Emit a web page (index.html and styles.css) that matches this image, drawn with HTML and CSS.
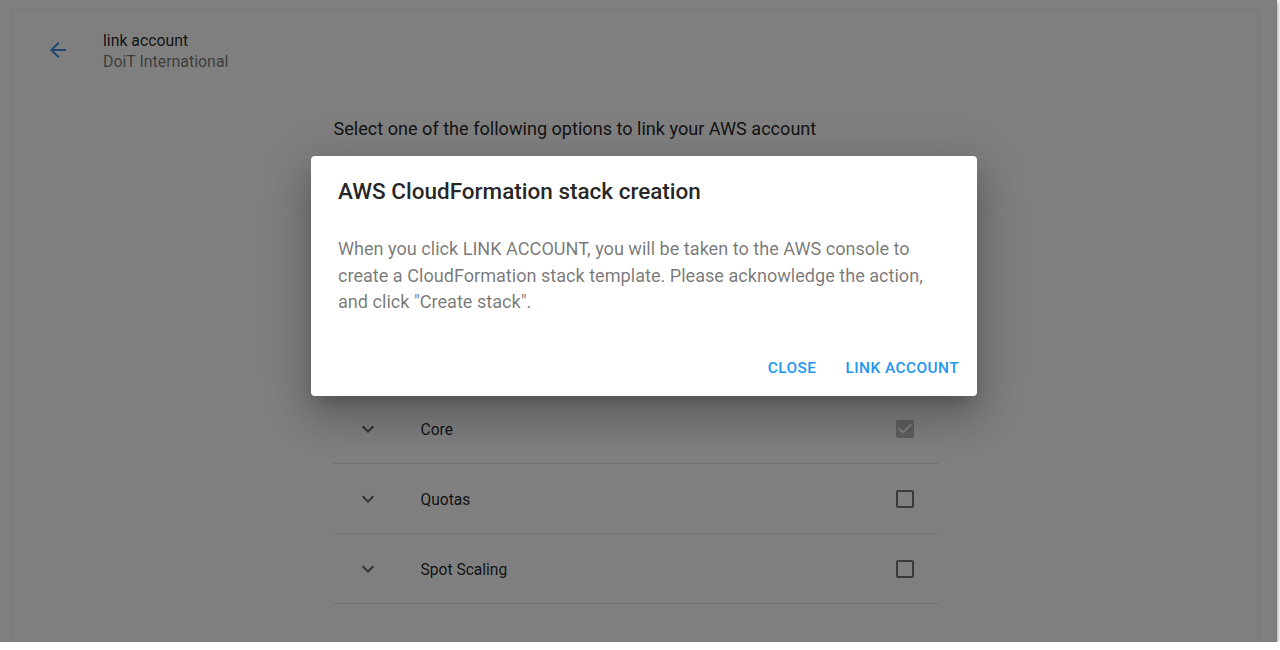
FILE: index.html
```html
<!DOCTYPE html>
<html lang="en">
<head>
<meta charset="utf-8">
<title>link account</title>
<link rel="stylesheet" href="styles.css">
</head>
<body>
<div class="window">
  <div class="card">
    <header class="header">
      <button class="icon-btn" aria-label="Back">
        <svg viewBox="0 0 24 24" width="24" height="24"><path d="M20 11H7.83l5.59-5.590L12 4l-8 8 8 8 1.41-1.41L7.83 13H20v-2z"/></svg>
      </button>
      <div class="header-text">
        <div class="header-title">link account</div>
        <div class="header-sub">DoiT International</div>
      </div>
    </header>

    <main class="content">
      <p class="intro">Select one of the following options to link your AWS account</p>
      <div class="options" aria-hidden="true"></div>

      <ul class="features">
        <li class="feature">
          <svg class="chev" viewBox="0 0 24 24" width="24" height="24"><path d="M16.59 8.59L12 13.17 7.41 8.59 6 10l6 6 6-6z"/></svg>
          <span class="feature-name">Core</span>
          <svg class="cb cb-disabled" viewBox="0 0 24 24" width="24" height="24"><path d="M19 3H5c-1.11 0-2 .9-2 2v14c0 1.1.89 2 2 2h14c1.11 0 2-.9 2-2V5c0-1.1-.89-2-2-2zm-9 14l-5-5 1.41-1.41L10 14.170l7.59-7.59L19 8l-9 9z"/></svg>
        </li>
        <li class="feature">
          <svg class="chev" viewBox="0 0 24 24" width="24" height="24"><path d="M16.59 8.59L12 13.17 7.41 8.59 6 10l6 6 6-6z"/></svg>
          <span class="feature-name">Quotas</span>
          <svg class="cb" viewBox="0 0 24 24" width="24" height="24"><path d="M19 5v14H5V5h14m0-2H5c-1.1 0-2 .9-2 2v14c0 1.1.9 2 2 2h14c1.1 0 2-.9 2-2V5c0-1.1-.9-2-2-2z"/></svg>
        </li>
        <li class="feature">
          <svg class="chev" viewBox="0 0 24 24" width="24" height="24"><path d="M16.59 8.59L12 13.17 7.41 8.59 6 10l6 6 6-6z"/></svg>
          <span class="feature-name">Spot Scaling</span>
          <svg class="cb" viewBox="0 0 24 24" width="24" height="24"><path d="M19 5v14H5V5h14m0-2H5c-1.1 0-2 .9-2 2v14c0 1.1.9 2 2 2h14c1.1 0 2-.9 2-2V5c0-1.1-.9-2-2-2z"/></svg>
        </li>
      </ul>
    </main>
  </div>

  <div class="backdrop">
    <div class="dialog" role="dialog">
      <h2 class="dialog-title">AWS CloudFormation stack creation</h2>
      <p class="dialog-body">When you click LINK ACCOUNT, you will be taken to the AWS console to create a CloudFormation stack template. Please acknowledge the action, and click "Create stack".</p>
      <div class="dialog-actions">
        <button class="text-btn">Close</button>
        <button class="text-btn">Link account</button>
      </div>
    </div>
  </div>
</div>
</body>
</html>
```

FILE: styles.css
```css
* { box-sizing: border-box; }

html, body {
  margin: 0;
  padding: 0;
  background: #ffffff;
  font-family: Roboto, "Liberation Sans", Arial, sans-serif;
  color: rgba(0, 0, 0, 0.87);
}

.window {
  position: relative;
  width: 1277px;
  height: 642px;
  overflow: hidden;
  background: #ffffff;
  box-shadow: 0 3px 5px rgba(0, 0, 0, 0.28), 1px 1px 3px rgba(0, 0, 0, 0.2);
  padding: 9px 19px 0 13px;
}

.card {
  height: 700px;
  background: #ffffff;
  border-radius: 2px;
  box-shadow: 0 0 2px rgba(0, 0, 0, 0.18);
}

.header {
  display: flex;
  align-items: center;
  gap: 21px;
  padding: 17px 0 0 21px;
}

.icon-btn {
  width: 48px;
  height: 48px;
  border: 0;
  background: transparent;
  padding: 0;
  display: flex;
  align-items: center;
  justify-content: center;
  fill: #3a93e0;
}

.header-text {
  padding-top: 1px;
}

.header-title {
  font-size: 15.8px;
  line-height: 21px;
  color: rgba(0, 0, 0, 0.87);
}

.header-sub {
  font-size: 15.9px;
  line-height: 21px;
  color: rgba(0, 0, 0, 0.54);
}

.content {
  width: 604px;
  margin: 0 auto;
}

.intro {
  margin: 43px 0 0;
  font-size: 18.1px;
  line-height: 24px;
}

.options {
  height: 253px;
}

.features {
  list-style: none;
  margin: 0;
  padding: 0;
}

.feature {
  display: flex;
  align-items: center;
  height: 70px;
  padding: 1px 21px 0 22px;
  border-bottom: 1px solid #e0e0e0;
}

.chev {
  fill: rgba(0, 0, 0, 0.6);
  flex: none;
}

.feature-name {
  flex: 1;
  margin-left: 41px;
  padding-top: 2px;
  font-size: 15.6px;
  color: rgba(0, 0, 0, 0.87);
}

.cb {
  flex: none;
  fill: #757575;
}

.cb-disabled {
  fill: #bdbdbd;
}

.backdrop {
  position: absolute;
  inset: 0;
  background: rgba(0, 0, 0, 0.5);
  padding: 156px 0 0 311px;
}

.dialog {
  width: 666px;
  height: 240px;
  background: #ffffff;
  border-radius: 4px;
  box-shadow: 0 11px 15px -7px rgba(0, 0, 0, 0.2), 0 24px 38px 3px rgba(0, 0, 0, 0.14), 0 9px 46px 8px rgba(0, 0, 0, 0.12);
  padding: 19px 0 0 27px;
}

.dialog-title {
  margin: 0;
  font-size: 22.5px;
  line-height: 32px;
  font-weight: 500;
  color: rgba(0, 0, 0, 0.87);
}

.dialog-body {
  margin: 29px 35px 0 0;
  font-size: 18.1px;
  line-height: 26.5px;
  color: rgba(0, 0, 0, 0.54);
}

.dialog-actions {
  display: flex;
  justify-content: flex-end;
  gap: 13px;
  margin-top: 34px;
  padding-right: 10px;
}

.text-btn {
  border: 0;
  background: transparent;
  height: 36px;
  padding: 0 8px;
  font-family: Roboto, "Liberation Sans", Arial, sans-serif;
  font-size: 15.4px;
  font-weight: 500;
  letter-spacing: 0.45px;
  text-transform: uppercase;
  color: #2196f3;
}
```
